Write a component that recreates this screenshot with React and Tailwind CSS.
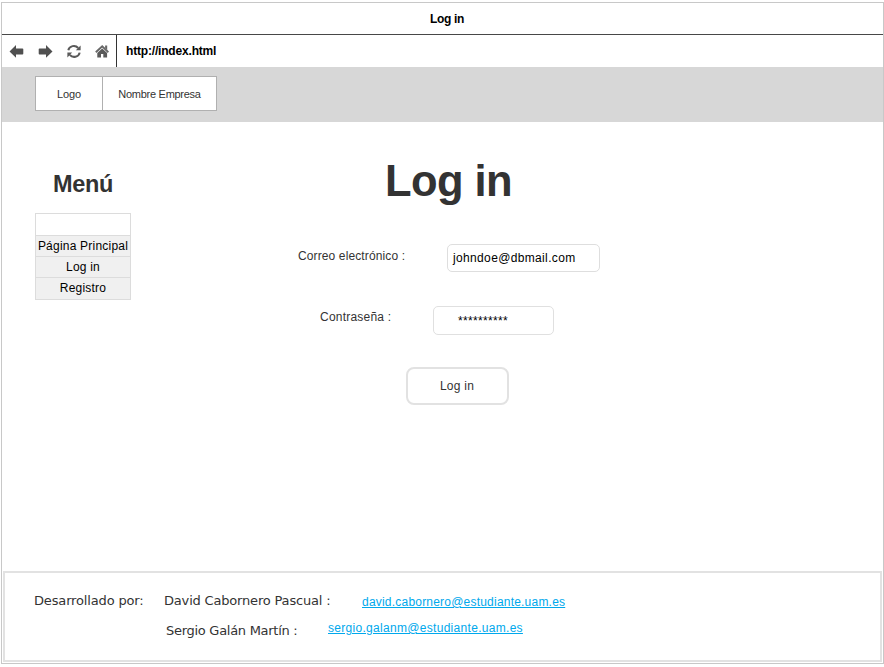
import React from "react";

const sans = "font-['Liberation_Sans',Arial,sans-serif]";
const verdana = "font-['DejaVu_Sans',Verdana,sans-serif]";

function ArrowIcon({ flip }) {
  return (
    <svg width="15" height="14" viewBox="0 0 15 14" className={flip ? "-scale-x-100" : ""}>
      <path d="M0.5 7.4 L7 1 V4.4 H13.4 Q14.3 4.4 14.3 5.3 V9.5 Q14.3 10.4 13.4 10.4 H7 V13.8 Z" fill="#505050" />
    </svg>
  );
}

function RefreshIcon() {
  return (
    <svg width="14" height="14" viewBox="0 0 14 14" fill="none" stroke="#5a5a5a" strokeWidth="2">
      <path d="M1.3 6.2 A5.6 5.3 0 0 1 11.2 4" />
      <path d="M12.7 8.6 A5.6 5.3 0 0 1 2.8 10.8" />
      <path d="M13.6 1.4 V6.2 H8.8 Z" fill="#5a5a5a" stroke="none" />
      <path d="M0.4 13.4 V8.6 H5.2 Z" fill="#5a5a5a" stroke="none" />
    </svg>
  );
}

function HomeIcon() {
  return (
    <svg width="14" height="14" viewBox="0 0 14 14">
      <path d="M0.8 8.2 L7.2 2.2 L13.4 8.2" fill="none" stroke="#686868" strokeWidth="1.9" />
      <path d="M10.1 1.5 H12.2 V6 L10.1 4 Z" fill="#686868" />
      <path d="M7.2 4.4 L12.1 9 V13.6 H8.3 V10 H6 V13.6 H2.3 V9 Z" fill="#5a5a5a" />
    </svg>
  );
}

function MenuItem({ children }) {
  return (
    <li className="flex h-[21px] items-center justify-center border-t border-[#dcdcdc] bg-[#f0f0f0] text-[12px] tracking-[0.22px] whitespace-nowrap text-black last:h-[22px] last:pb-px">
      {children}
    </li>
  );
}

export default function App() {
  return (
    <div className={`h-[667px] w-[884px] overflow-hidden bg-white pt-[2px] pl-px text-[#333] ${sans}`}>
      <div className="flex h-[662px] w-[883px] flex-col border border-[#c8c8c8]">
        <div className="flex h-[32px] shrink-0 items-center justify-center border-b border-[#484848] pl-[9px] text-[12px] font-bold tracking-[-0.3px] text-black">
          Log in
        </div>
        <div className="flex h-[32px] shrink-0">
          <div className="flex w-[115px] items-center gap-[14px] border-r border-[#333] pl-[7px]">
            <ArrowIcon />
            <ArrowIcon flip />
            <RefreshIcon />
            <HomeIcon />
          </div>
          <div className="flex items-center pl-[9px] text-[12px] font-bold tracking-[-0.18px] text-black">
            http://index.html
          </div>
        </div>
        <header className="flex h-[55px] shrink-0 items-start bg-[#d7d7d7] pt-[9px] pl-[33px]">
          <div className="flex h-[35px] w-[182px] border border-[#b0b0b0] bg-white text-[11px]">
            <div className="flex w-[67px] items-center justify-center border-r border-[#b0b0b0] pt-px tracking-[-0.1px]">
              Logo
            </div>
            <div className="flex w-[113px] items-center justify-center pt-px tracking-[-0.28px]">Nombre Empresa</div>
          </div>
        </header>
        <main className="flex h-[449px] shrink-0">
          <nav className="w-[129px] pl-[33px]">
            <h2 className="mt-[48px] h-[28px] text-center text-[23.5px] leading-[28px] font-bold tracking-[-0.4px]">
              Menú
            </h2>
            <ul className="mt-[15px] w-[96px] border border-[#dcdcdc]">
              <li className="h-[21px] bg-white" />
              <MenuItem>Página Principal</MenuItem>
              <MenuItem>Log in</MenuItem>
              <MenuItem>Registro</MenuItem>
            </ul>
          </nav>
          <form className="pl-[166px]">
            <h1 className="mt-[33px] ml-[88px] h-[52px] text-[43.5px] leading-[52px] font-bold tracking-[-0.6px]">
              Log in
            </h1>
            <div className="mt-[37px] flex h-[28px]">
              <span className="w-[150px] pt-[3px] pl-px text-[12px] leading-[18px] tracking-[0.12px]">
                Correo electrónico :
              </span>
              <div className="flex h-[28px] w-[153px] items-center rounded-[5px] border border-[#dedede] pl-[5px] text-[12px] tracking-[0.35px] text-black">
                johndoe@dbmail.com
              </div>
            </div>
            <div className="mt-[34px] flex h-[29px] pl-[23px]">
              <span className="w-[113px] pt-[2px] text-[12px] leading-[18px] tracking-[0.22px]">Contraseña :</span>
              <div className="h-[29px] w-[121px] rounded-[5px] border border-[#e0e0e0] pt-[5px] pl-[24px] text-[12px] leading-[18px] tracking-[0.33px] text-black">
                **********
              </div>
            </div>
            <div className="mt-[32px] ml-[109px] flex h-[38px] w-[103px] items-center justify-center rounded-[8px] border-2 border-[#e2e2e2] pr-px text-[12px] tracking-[0.25px]">
              Log in
            </div>
          </form>
        </main>
        <footer className="ml-px h-[91px] w-[879px] border-2 border-[#e2e2e2]">
          <div className="flex h-[30px] pt-[18px] pl-[29px] text-[13px] leading-[20px] whitespace-nowrap">
            <span className={`w-[130px] tracking-[-0.15px] ${verdana}`}>Desarrollado por:</span>
            <span className={`w-[198px] tracking-[-0.18px] ${verdana}`}>David Cabornero Pascual :</span>
            <a className="pt-px text-[12px] tracking-[0.21px] text-[#00a8ec] underline">
              david.cabornero@estudiante.uam.es
            </a>
          </div>
          <div className="flex h-[30px] pt-[18px] pl-[161px] text-[13px] leading-[20px] whitespace-nowrap">
            <span className={`w-[162px] tracking-[-0.28px] ${verdana}`}>Sergio Galán Martín :</span>
            <a className="-mt-[3px] text-[12px] tracking-[0.3px] text-[#00a8ec] underline">
              sergio.galanm@estudiante.uam.es
            </a>
          </div>
        </footer>
      </div>
    </div>
  );
}
